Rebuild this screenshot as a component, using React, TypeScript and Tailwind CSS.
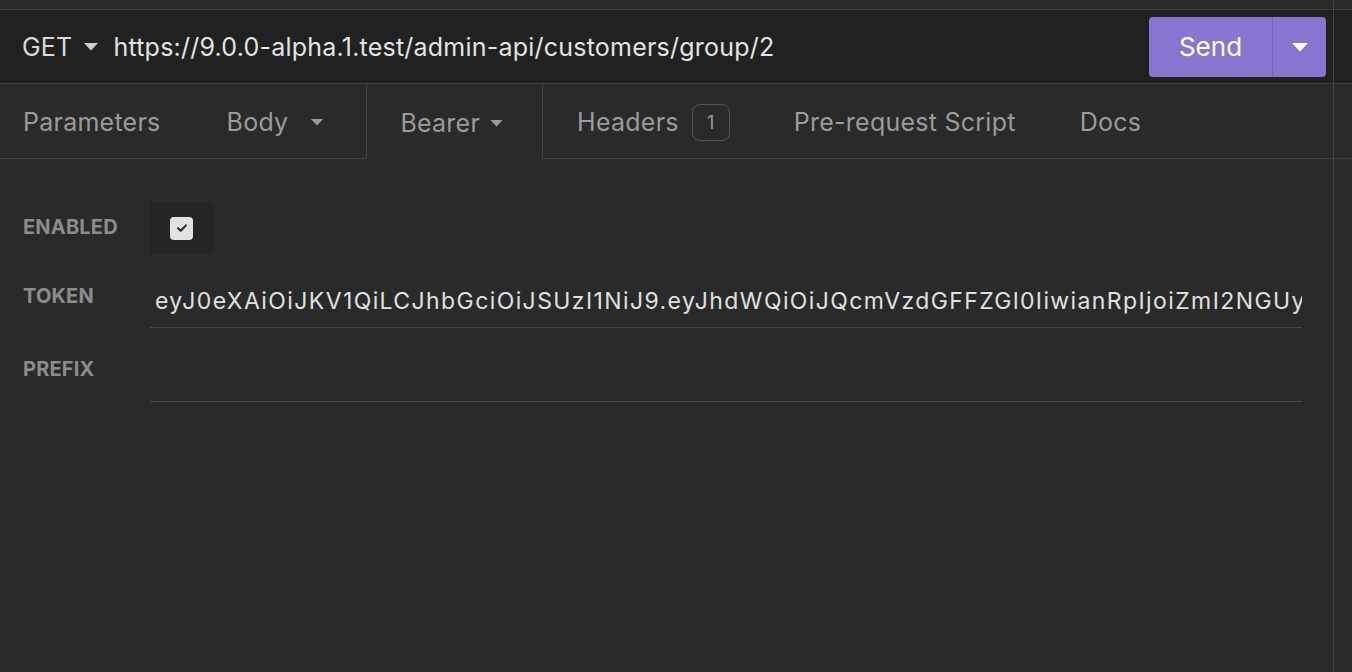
import React from "react";

const Caret = ({ className = "" }: { className?: string }) => (
  <svg viewBox="0 0 14 8" className={className} fill="currentColor">
    <path d="M0 0 L14 0 L7 7.5 Z" />
  </svg>
);

const TOKEN =
  "eyJ0eXAiOiJKV1QiLCJhbGciOiJSUzI1NiJ9.eyJhdWQiOiJQcmVzdGFFZGl0IiwianRpIjoiZmI2NGUyNzE0ZjQ5NDMwYzk1ZmYxMmQ2YTI3ZjE2Y2EiLCJpYXQiOjE2NjY";

export default function App() {
  return (
    <div
      className="w-[1352px] h-[672px] overflow-hidden bg-[#2a2a2a] flex"
      style={{ fontFamily: "Inter, 'Noto Sans', sans-serif" }}
    >
      {/* Left pane */}
      <div className="w-[1333px] flex flex-col shrink-0">
        <div className="h-[10px] bg-[#2a2a2a] border-b border-[#3e3e3e] shrink-0" />
        {/* URL bar */}
        <div className="h-[74px] bg-[#212121] border-b border-[#404040] flex items-center shrink-0 pl-[22px] pr-[7px]">
          <span className="text-[25px] tracking-[0.2px] text-[#d9d9d9] leading-none pt-[2px]">GET</span>
          <Caret className="w-[16px] h-[8px] ml-[11px] text-[#cfcfcf]" />
          <span className="ml-[14px] text-[25px] tracking-[0.22px] text-[#e3e3e3] leading-none flex-1 whitespace-nowrap pt-[2px]">
            https://9.0.0-alpha.1.test/admin-api/customers/group/2
          </span>
          <div className="flex h-[60px] w-[177px] rounded-[4px] bg-[#8875d0] overflow-hidden mt-[1px]">
            <div className="w-[124px] flex items-center justify-center text-white text-[26px] leading-none border-r border-[#7766b8]">
              Send
            </div>
            <div className="flex-1 flex items-center justify-center">
              <Caret className="w-[16px] h-[9px] text-white" />
            </div>
          </div>
        </div>
        {/* Tabs */}
        <div className="h-[75px] flex items-stretch shrink-0 text-[25px] tracking-[0.25px] text-[#9b9b9b] leading-none">
          <div className="flex items-center pt-[3px] pl-[23px] pr-[33px] border-b border-[#404040]">
            Parameters
          </div>
          <div className="flex items-center pt-[3px] pl-[33px] pr-[42px] border-b border-[#404040]">
            Body
            <Caret className="w-[14px] h-[7px] ml-[22px] text-[#9b9b9b]" />
          </div>
          <div className="flex items-center pt-[3px] pl-[33px] pr-[38px] border-l border-r border-[#404040]">
            Bearer
            <Caret className="w-[15px] h-[7px] ml-[9px] text-[#9b9b9b]" />
          </div>
          <div className="flex items-center pt-[3px] pl-[34px] pr-[32px] border-b border-[#404040]">
            Headers
            <span className="ml-[13px] w-[38px] h-[37px] rounded-[8px] border border-[#575757] flex items-center justify-center text-[18px] text-[#9b9b9b]">
              1
            </span>
          </div>
          <div className="flex items-center pt-[3px] pl-[32px] pr-[32px] border-b border-[#404040]">
            Pre-request Script
          </div>
          <div className="flex items-center pt-[3px] pl-[32px] pr-[32px] border-b border-[#404040]">
            Docs
          </div>
          <div className="flex-1 border-b border-[#404040]" />
        </div>
        {/* Auth form */}
        <div className="flex flex-col gap-[22px] pt-[43px] pl-[23px] pr-[31px]">
          <div className="flex h-[52px]">
            <div className="w-[127px] pt-[15px] text-[20px] font-bold text-[#8c8c8c] leading-none tracking-[0.2px]">
              ENABLED
            </div>
            <div className="w-[63px] h-[52px] bg-[#252525] flex items-center justify-center">
              <div className="w-[23px] h-[23px] rounded-[4px] bg-[#e2e2e2] flex items-center justify-center">
                <svg viewBox="0 0 16 16" className="w-[14px] h-[14px]" fill="none" stroke="#2a2a2a" strokeWidth="2.4" strokeLinecap="round" strokeLinejoin="round">
                  <path d="M3.5 8.2 L6.6 11.2 L12.5 5" />
                </svg>
              </div>
            </div>
          </div>
          <div className="flex h-[52px]">
            <div className="w-[127px] pt-[10px] text-[20px] font-bold text-[#8c8c8c] leading-none tracking-[0.2px]">
              TOKEN
            </div>
            <div className="flex-1 min-w-0 border-b border-[#484848] flex items-center pl-[5px] overflow-hidden">
              <span className="text-[23px] tracking-[1.4px] text-[#e0e0e0] whitespace-nowrap leading-none">{TOKEN}</span>
            </div>
          </div>
          <div className="flex h-[52px]">
            <div className="w-[127px] pt-[9px] text-[20px] font-bold text-[#8c8c8c] leading-none tracking-[0.2px]">
              PREFIX
            </div>
            <div className="flex-1 border-b border-[#484848]" />
          </div>
        </div>
      </div>
      {/* Divider */}
      <div className="w-[1px] bg-[#444444] shrink-0" />
      {/* Right pane */}
      <div className="flex-1 flex flex-col">
        <div className="h-[10px] bg-[#2a2a2a] border-b border-[#3e3e3e]" />
        <div className="h-[74px] bg-[#212121] border-b border-[#404040]" />
        <div className="h-[75px] border-b border-[#3a3a3a]" />
        <div className="flex-1 bg-[#2b2b2b]" />
      </div>
    </div>
  );
}
